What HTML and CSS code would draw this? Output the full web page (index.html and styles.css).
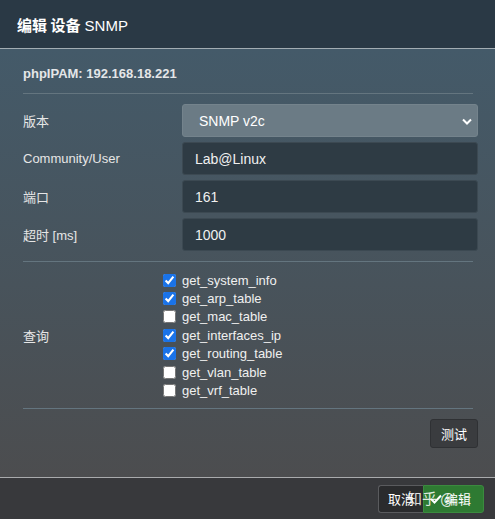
FILE: index.html
```html
<!DOCTYPE html>
<html lang="zh-CN">
<head>
    <meta charset="UTF-8">
    <meta name="viewport" content="width=device-width, initial-scale=1.0">
    <title>编辑 设备 SNMP</title>
    <link rel="stylesheet" href="styles.css">
</head>
<body>
    <div class="modal">
        <div class="modal-header">
            <h4><b>编辑 设备</b> SNMP</h4>
        </div>

        <div class="modal-body">
            <div class="device-name">phpIPAM: 192.168.18.221</div>
            <hr>

            <div class="form-row first">
                <label>版本</label>
                <div class="select">
                    <span>SNMP v2c</span>
                    <svg class="chevron" width="10" height="7" viewBox="0 0 10 7">
                        <path d="M1 1.5 L5 5.5 L9 1.5" fill="none" stroke="#fff" stroke-width="2"/>
                    </svg>
                </div>
            </div>
            <div class="form-row">
                <label>Community/User</label>
                <div class="input">Lab@Linux</div>
            </div>
            <div class="form-row">
                <label>端口</label>
                <div class="input">161</div>
            </div>
            <div class="form-row">
                <label>超时 [ms]</label>
                <div class="input">1000</div>
            </div>
            <hr class="after-form">

            <div class="query-row">
                <label>查询</label>
                <div class="checks" id="checks"></div>
            </div>
            <hr>

            <div class="test-row">
                <button class="btn btn-dark">测试</button>
            </div>
        </div>

        <div class="modal-footer">
            <button class="btn btn-cancel">取消</button>
            <button class="btn btn-success">
                <svg width="12" height="10" viewBox="0 0 12 10">
                    <path d="M1 5 L4.5 8.5 L11 1.5" fill="none" stroke="#fff" stroke-width="2"/>
                </svg>
                编辑
            </button>
            <span class="watermark">知乎 @</span>
        </div>
    </div>

    <script>
        const queries = [
            ['get_system_info', true],
            ['get_arp_table', true],
            ['get_mac_table', false],
            ['get_interfaces_ip', true],
            ['get_routing_table', true],
            ['get_vlan_table', false],
            ['get_vrf_table', false]
        ];

        const checks = document.getElementById('checks');

        // Build the query checkboxes
        queries.forEach(([name, checked]) => {
            const row = document.createElement('label');
            row.className = 'check';
            row.innerHTML = `<input type="checkbox" ${checked ? 'checked' : ''}><span>${name}</span>`;
            checks.appendChild(row);
        });
    </script>
</body>
</html>
```

FILE: styles.css
```css
body {
    margin: 0;
    font-family: "Liberation Sans", Arial, "Noto Sans CJK SC", sans-serif;
    font-size: 13px;
    color: #e8e8e8;
    background: #38393c;
}

.modal {
    width: 495px;
    height: 519px;
    display: flex;
    flex-direction: column;
}

.modal-header {
    height: 48px;
    display: flex;
    align-items: center;
    padding-left: 17px;
    background: #2a3945;
    border-bottom: 1px solid #a3adb3;
}

.modal-header h4 {
    margin: 0;
    font-size: 15px;
    font-weight: normal;
    color: #fff;
}

.modal-header b {
    font-family: "Noto Sans CJK SC", sans-serif;
    font-weight: bold;
}

.modal-body {
    flex: 1;
    padding: 0 17px 0 23px;
    background: linear-gradient(to bottom, #445a69, #48535b 55%, #4c4d4f);
    border-bottom: 1px solid #a9abad;
}

.device-name {
    font-weight: bold;
    color: #e4e6e8;
    padding: 17px 0 0;
    height: 27px;
}

hr {
    border: none;
    border-top: 1px solid #64757f;
    margin: 0 5px 0 0;
}

hr.after-form {
    margin-top: 10px;
}

.form-row {
    display: grid;
    grid-template-columns: 159px 1fr;
    align-items: center;
    margin-top: 5px;
}

.form-row.first {
    margin-top: 10px;
}

label {
    color: #e6e6e6;
}

.select,
.input {
    height: 31px;
    display: flex;
    align-items: center;
    font-size: 14px;
    border-radius: 3px;
}

.select {
    justify-content: space-between;
    padding: 0 5px 0 16px;
    background: #6b7b85;
    border: 1px solid #74838c;
    color: #fff;
}

.input {
    padding: 0 12px;
    background: #2e3b44;
    border: 1px solid #3c4952;
    color: #f0f0f0;
}

.chevron {
    margin-top: 1px;
}

.query-row {
    display: grid;
    grid-template-columns: 140px 1fr;
    align-items: center;
    padding: 9px 0 8px;
}

.checks {
    display: flex;
    flex-direction: column;
}

.check {
    display: flex;
    align-items: center;
    height: 18.4px;
    color: #f0f0f0;
}

.check input {
    width: 13px;
    height: 13px;
    margin: 0 6px 0 0;
    accent-color: #1a73e8;
}

.test-row {
    display: flex;
    justify-content: flex-end;
    padding-top: 10px;
}

.btn {
    height: 29px;
    padding: 0 10px;
    font-family: "Noto Sans CJK SC", sans-serif;
    font-size: 13px;
    color: #fff;
    white-space: nowrap;
    border-radius: 3px;
    cursor: pointer;
}

.btn-dark {
    background: #3a3c3f;
    border: 1px solid #2f3134;
}

.modal-footer {
    position: relative;
    height: 41px;
    display: flex;
    align-items: center;
    justify-content: flex-end;
    padding-right: 11px;
    background: #38393c;
}

.btn-cancel {
    width: 45px;
    height: 28px;
    padding: 0;
    background: #2a2b2d;
    border: 1px solid #5a5b5e;
    border-right: none;
    border-radius: 3px 0 0 3px;
}

.btn-success {
    width: 61px;
    height: 28px;
    padding: 0 0 0 6px;
    display: flex;
    align-items: center;
    gap: 3px;
    background: #2e7a32;
    border: 1px solid #3b8a3f;
    border-radius: 0 3px 3px 0;
}

.watermark {
    position: absolute;
    left: 407px;
    top: 9px;
    font-family: "Noto Sans CJK SC", sans-serif;
    font-size: 15px;
    color: rgba(255, 255, 255, 0.85);
    pointer-events: none;
}
```
